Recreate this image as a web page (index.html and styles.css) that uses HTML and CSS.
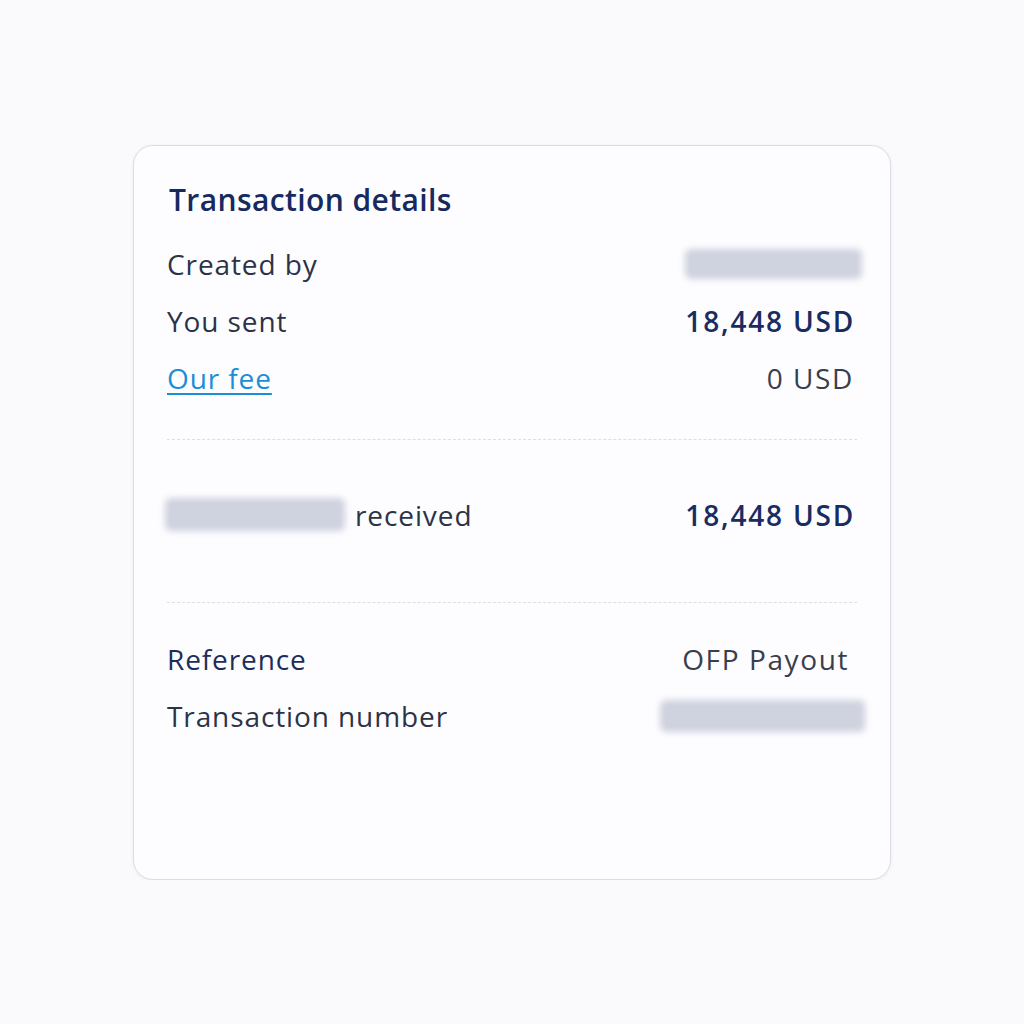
FILE: index.html
```html
<!DOCTYPE html>
<html lang="en">
<head>
    <meta charset="UTF-8">
    <meta name="viewport" content="width=device-width, initial-scale=1.0">
    <title>Transaction details</title>
    <link rel="stylesheet" href="styles.css">
</head>
<body>
    <div class="card">
        <h2 class="title">Transaction details</h2>

        <div class="row">
            <span class="label">Created by</span>
            <span class="blur blur-creator"></span>
        </div>
        <div class="row">
            <span class="label">You sent</span>
            <span class="amount">18,448 USD</span>
        </div>
        <div class="row">
            <a class="link" href="#">Our fee</a>
            <span class="value">0 USD</span>
        </div>

        <div class="divider divider-first"></div>

        <div class="row">
            <span class="label received"><span class="blur blur-name"></span>received</span>
            <span class="amount">18,448 USD</span>
        </div>

        <div class="divider divider-second"></div>

        <div class="row">
            <span class="label strong">Reference</span>
            <span class="value value-ref">OFP Payout</span>
        </div>
        <div class="row">
            <span class="label">Transaction number</span>
            <span class="blur blur-number"></span>
        </div>
    </div>
</body>
</html>
```

FILE: styles.css
```css
body {
    margin: 0;
    padding: 145px 0 0 133px;
    background-color: #fafafc;
    font-family: "Open Sans", Arial, sans-serif;
}
.card {
    box-sizing: border-box;
    width: 758px;
    height: 735px;
    padding: 34px 37px 0 33px;
    background: #fdfdff;
    border: 1px solid #d9dbe7;
    border-radius: 20px;
    box-shadow: 0 1px 4px rgba(40, 50, 90, 0.06);
}
.title {
    margin: 0 0 15px 2px;
    height: 40px;
    line-height: 40px;
    font-size: 30px;
    font-weight: 600;
    letter-spacing: 0.4px;
    color: #162a5f;
}
.row {
    display: flex;
    justify-content: space-between;
    align-items: center;
    height: 57px;
    font-size: 28px;
    letter-spacing: 0.9px;
}
.label {
    color: #2c3347;
}
.strong {
    color: #1d2d5a;
}
.value {
    color: #393e4d;
    letter-spacing: 1.6px;
    margin-right: -1px;
}
.value-ref {
    margin-right: 4px;
}
.amount {
    font-weight: 600;
    letter-spacing: 1.8px;
    color: #192c62;
    margin-right: -2px;
}
.link {
    color: #1c8ed6;
    text-decoration: underline;
    text-underline-offset: 4px;
    text-decoration-thickness: 1.5px;
}
.received {
    display: flex;
    align-items: center;
    gap: 10px;
    margin-left: -2px;
}
.divider {
    border-top: 1.5px dashed #dcdee6;
    margin-right: -4px;
}
.divider-first {
    margin-top: 33px;
    margin-bottom: 46px;
}
.divider-second {
    margin-top: 59px;
    margin-bottom: 27px;
}
.blur {
    display: inline-block;
    height: 30px;
    background: #cfd2df;
    border-radius: 6px;
    filter: blur(3px);
}
.blur-creator {
    width: 177px;
    margin-right: -9px;
}
.blur-name {
    width: 180px;
    height: 33px;
}
.blur-number {
    width: 205px;
    height: 32px;
    margin-right: -12px;
}
```
